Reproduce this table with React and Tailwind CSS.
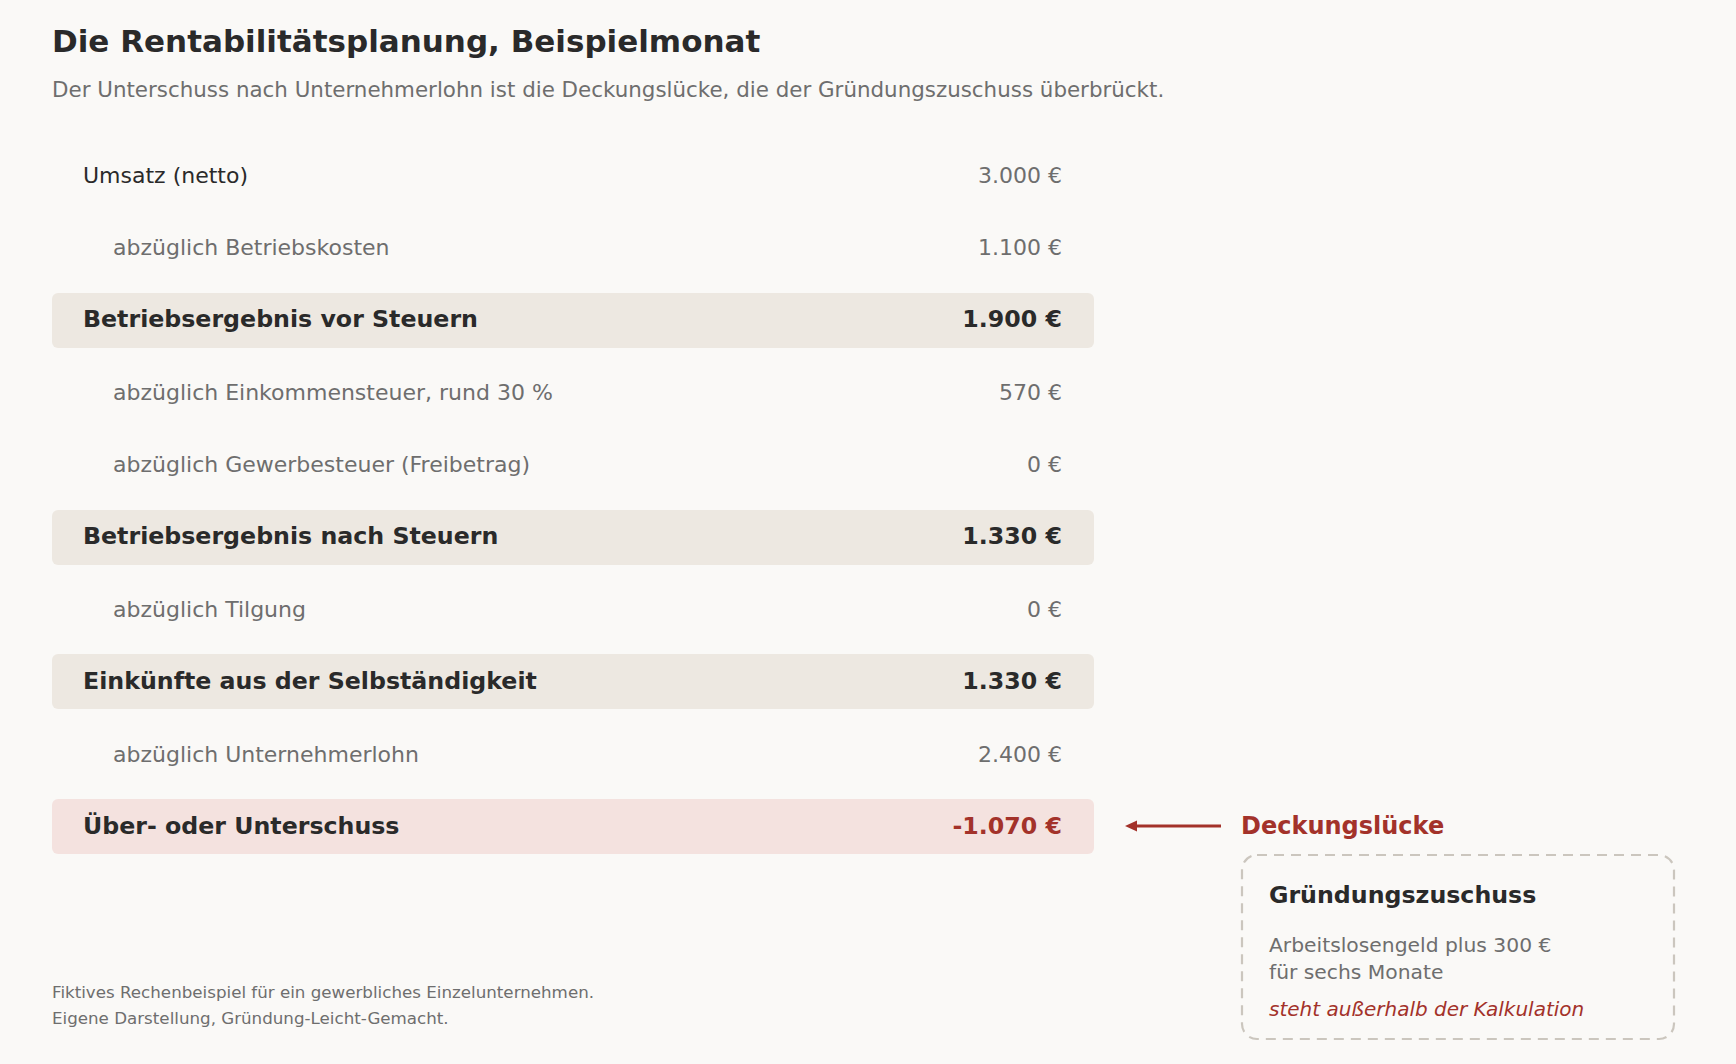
import React from "react";

const rows = [
  { label: "Umsatz (netto)", value: "3.000 €", type: "top" },
  { label: "abzüglich Betriebskosten", value: "1.100 €", type: "sub" },
  { label: "Betriebsergebnis vor Steuern", value: "1.900 €", type: "total" },
  { label: "abzüglich Einkommensteuer, rund 30 %", value: "570 €", type: "sub" },
  { label: "abzüglich Gewerbesteuer (Freibetrag)", value: "0 €", type: "sub" },
  { label: "Betriebsergebnis nach Steuern", value: "1.330 €", type: "total" },
  { label: "abzüglich Tilgung", value: "0 €", type: "sub" },
  { label: "Einkünfte aus der Selbständigkeit", value: "1.330 €", type: "total" },
  { label: "abzüglich Unternehmerlohn", value: "2.400 €", type: "sub" },
  { label: "Über- oder Unterschuss", value: "-1.070 €", type: "result" },
];

function Row({ row }) {
  if (row.type === "top") {
    return (
      <div className="w-[1042px] h-[55px] flex items-center justify-between pl-[31px] pr-[32px] text-[22px]">
        <span className="text-[#2a2a2a]">{row.label}</span>
        <span className="text-[#6e6e6e]">{row.value}</span>
      </div>
    );
  }
  if (row.type === "sub") {
    return (
      <div className="w-[1042px] h-[55px] flex items-center justify-between pl-[61px] pr-[32px] text-[22px] text-[#6e6e6e]">
        <span>{row.label}</span>
        <span>{row.value}</span>
      </div>
    );
  }
  if (row.type === "total") {
    return (
      <div className="w-[1042px] h-[55px] flex items-center justify-between pl-[31px] pr-[32px] rounded-[6px] bg-[#ede8e1] text-[23.7px] font-bold text-[#2a2a2a]">
        <span>{row.label}</span>
        <span>{row.value}</span>
      </div>
    );
  }
  return (
    <div className="flex items-center">
      <div className="w-[1042px] h-[55px] flex items-center justify-between pl-[31px] pr-[32px] rounded-[6px] bg-[#f4e2df] text-[23.7px] font-bold">
        <span className="text-[#2a2a2a]">{row.label}</span>
        <span className="text-[#a3322a]">{row.value}</span>
      </div>
      <svg className="ml-[31px]" width="96" height="14" viewBox="0 0 96 14">
        <line x1="8" y1="7" x2="96" y2="7" stroke="#a3322a" strokeWidth="3.2" />
        <polygon points="0,7 12,1.5 12,12.5" fill="#a3322a" />
      </svg>
      <span className="ml-[20px] text-[24px] font-bold text-[#a3322a]">Deckungslücke</span>
    </div>
  );
}

export default function App() {
  return (
    <div className="w-[1736px] h-[1064px] overflow-hidden bg-[#faf9f7] font-['DejaVu_Sans',sans-serif] pl-[52px] pt-[23px]">
      <h1 className="text-[31px] leading-[36px] font-bold text-[#2a2a2a]">
        Die Rentabilitätsplanung, Beispielmonat
      </h1>
      <p className="mt-[17px] text-[21.4px] leading-[28px] text-[#6e6e6e]">
        Der Unterschuss nach Unternehmerlohn ist die Deckungslücke, die der Gründungszuschuss überbrückt.
      </p>

      <div className="mt-[44px] flex flex-col gap-[17.33px]">
        {rows.map((r, i) => (
          <Row key={i} row={r} />
        ))}
      </div>

      <div className="flex items-start">
        <div className="w-[1189px] pt-[125px] text-[16.7px] leading-[26px] text-[#6e6e6e]">
          <div>Fiktives Rechenbeispiel für ein gewerbliches Einzelunternehmen.</div>
          <div>Eigene Darstellung, Gründung-Leicht-Gemacht.</div>
        </div>
        <div className="relative w-[434px] pl-[28px] pt-[26px] pb-[17px]">
          <svg className="absolute inset-0 w-full h-full overflow-visible" preserveAspectRatio="none">
            <rect x="1" y="1" width="432" height="calc(100% - 2px)" rx="15" ry="15" fill="none" stroke="#cbc6be" strokeWidth="2.2" strokeDasharray="10 7" />
          </svg>
          <div className="relative text-[23.7px] leading-[30px] font-bold text-[#2a2a2a]">Gründungszuschuss</div>
          <div className="relative mt-[22px] text-[20.3px] leading-[27px] text-[#6e6e6e]">
            <div>Arbeitslosengeld plus 300 €</div>
            <div>für sechs Monate</div>
          </div>
          <div className="relative mt-[10px] text-[20px] leading-[27px] italic text-[#a3322a]">
            steht außerhalb der Kalkulation
          </div>
        </div>
      </div>
    </div>
  );
}
